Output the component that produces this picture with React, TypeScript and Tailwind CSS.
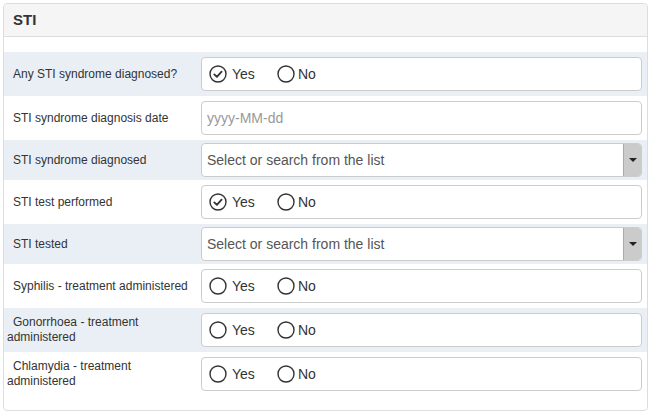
import React from "react";

type Row =
  | { label: string; kind: "radio"; value?: "yes" | "no"; h: number }
  | { label: string; kind: "date"; h: number }
  | { label: string; kind: "select"; h: number };

const rows: Row[] = [
  { label: "Any STI syndrome diagnosed?", kind: "radio", value: "yes", h: 44 },
  { label: "STI syndrome diagnosis date", kind: "date", h: 44 },
  { label: "STI syndrome diagnosed", kind: "select", h: 40 },
  { label: "STI test performed", kind: "radio", value: "yes", h: 44 },
  { label: "STI tested", kind: "select", h: 40 },
  { label: "Syphilis - treatment administered", kind: "radio", h: 44 },
  { label: "Gonorrhoea - treatment administered", kind: "radio", h: 44 },
  { label: "Chlamydia - treatment administered", kind: "radio", h: 44 },
];

function RadioIcon({ checked }: { checked?: boolean }) {
  return (
    <svg width="18" height="18" viewBox="0 0 18 18" className="shrink-0">
      <circle cx="9" cy="9" r="8" fill="none" stroke="#333" strokeWidth="1.4" />
      {checked && (
        <path d="M5.3 9.4 L7.9 11.9 L12.6 6.6" fill="none" stroke="#333" strokeWidth="1.8" strokeLinecap="round" strokeLinejoin="round" />
      )}
    </svg>
  );
}

function Field({ row }: { row: Row }) {
  if (row.kind === "radio") {
    return (
      <div className="h-[34px] flex items-center border border-[#ccc] rounded-[4px] bg-white pl-[7px] text-[14px] text-[#333]">
        <label className="w-[68px] flex items-center">
          <RadioIcon checked={row.value === "yes"} />
          <span className="ml-[5px]">Yes</span>
        </label>
        <label className="flex items-center">
          <RadioIcon checked={row.value === "no"} />
          <span className="ml-[3px]">No</span>
        </label>
      </div>
    );
  }
  if (row.kind === "date") {
    return (
      <div className="h-[34px] flex items-center border border-[#ccc] rounded-[4px] bg-white pl-[5px] text-[14px] text-[#999]">
        yyyy-MM-dd
      </div>
    );
  }
  return (
    <div className="h-[34px] flex items-stretch border border-[#ccc] rounded-[4px] bg-white text-[14px] text-[#555] overflow-hidden">
      <div className="flex-1 flex items-center pl-[5px]">Select or search from the list</div>
      <div className="w-[18px] bg-[#cbcbcb] border-l border-[#aaa] flex items-center justify-center">
        <div className="w-0 h-0 border-l-[4px] border-r-[4px] border-t-[4px] border-l-transparent border-r-transparent border-t-[#222]" />
      </div>
    </div>
  );
}

export default function App() {
  return (
    <div className="min-h-screen w-full bg-white pt-[3px] pl-[3px] font-['Liberation_Sans',Arial,sans-serif]">
      <div className="w-[645px] border border-[#ddd] rounded-[4px] bg-white">
        <div className="h-[33px] bg-[#f5f5f5] border-b border-[#ddd] rounded-t-[4px] flex items-center pl-[9px]">
          <h3 className="text-[15px] font-bold text-[#333]">STI</h3>
        </div>
        <div className="pt-[15px] pb-[14px]">
          {rows.map((row, i) => (
            <div
              key={row.label}
              className={`flex items-center ${i % 2 === 0 ? "bg-[#eaeff6]" : "bg-white"}`}
              style={{ height: row.h }}
            >
              <div className="w-[197px] shrink-0 pl-[3px] pr-[7px] indent-[6px] text-[12px] leading-[15px] text-[#333]">
                {row.label}
              </div>
              <div className="flex-1 pr-[5px]">
                <Field row={row} />
              </div>
            </div>
          ))}
        </div>
      </div>
    </div>
  );
}
